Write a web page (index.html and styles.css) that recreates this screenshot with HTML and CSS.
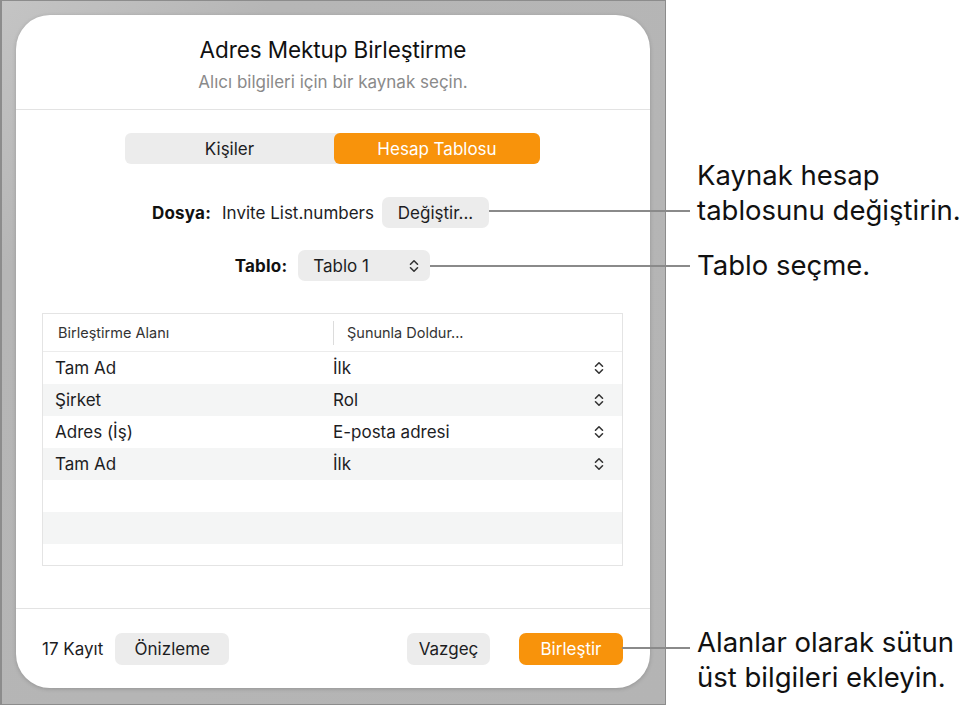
FILE: index.html
```html
<!DOCTYPE html>
<html lang="tr">
<head>
<meta charset="utf-8">
<title>Adres Mektup Birleştirme</title>
<link rel="stylesheet" href="styles.css">
</head>
<body>
<div class="page">
  <div class="frame">
    <div class="dialog">
      <header class="dlg-head">
        <h1 class="title">Adres Mektup Birleştirme</h1>
        <p class="subtitle">Alıcı bilgileri için bir kaynak seçin.</p>
      </header>
      <div class="dlg-body">
        <div class="segmented">
          <div class="seg">Kişiler</div>
          <div class="seg seg-active">Hesap Tablosu</div>
        </div>
        <div class="row row-file">
          <span class="lbl">Dosya:</span>
          <span class="val">Invite List.numbers</span>
          <button class="btn btn-change">Değiştir...</button>
        </div>
        <div class="row row-table">
          <span class="lbl">Tablo:</span>
          <button class="btn popup"><span>Tablo 1</span>
            <svg class="chev" width="10" height="14" viewBox="0 0 10 14"><path d="M1.5 5.2 L5 1.8 L8.5 5.2 M1.5 8.8 L5 12.2 L8.5 8.8" fill="none" stroke="#333" stroke-width="1.6" stroke-linecap="round" stroke-linejoin="round"/></svg>
          </button>
        </div>
        <div class="map-table">
          <div class="thead">
            <div class="th">Birleştirme Alanı</div>
            <div class="th th-2">Şununla Doldur...</div>
          </div>
          <div class="tbody">
            <div class="tr"><span class="c1">Tam Ad</span><span class="c2">İlk</span><svg class="chev" width="10" height="14" viewBox="0 0 10 14"><path d="M1.5 5.2 L5 1.8 L8.5 5.2 M1.5 8.8 L5 12.2 L8.5 8.8" fill="none" stroke="#333" stroke-width="1.6" stroke-linecap="round" stroke-linejoin="round"/></svg></div>
            <div class="tr alt"><span class="c1">Şirket</span><span class="c2">Rol</span><svg class="chev" width="10" height="14" viewBox="0 0 10 14"><path d="M1.5 5.2 L5 1.8 L8.5 5.2 M1.5 8.8 L5 12.2 L8.5 8.8" fill="none" stroke="#333" stroke-width="1.6" stroke-linecap="round" stroke-linejoin="round"/></svg></div>
            <div class="tr"><span class="c1">Adres (İş)</span><span class="c2">E-posta adresi</span><svg class="chev" width="10" height="14" viewBox="0 0 10 14"><path d="M1.5 5.2 L5 1.8 L8.5 5.2 M1.5 8.8 L5 12.2 L8.5 8.8" fill="none" stroke="#333" stroke-width="1.6" stroke-linecap="round" stroke-linejoin="round"/></svg></div>
            <div class="tr alt"><span class="c1">Tam Ad</span><span class="c2">İlk</span><svg class="chev" width="10" height="14" viewBox="0 0 10 14"><path d="M1.5 5.2 L5 1.8 L8.5 5.2 M1.5 8.8 L5 12.2 L8.5 8.8" fill="none" stroke="#333" stroke-width="1.6" stroke-linecap="round" stroke-linejoin="round"/></svg></div>
            <div class="tr"></div>
            <div class="tr alt"></div>
            <div class="tr"></div>
          </div>
        </div>
      </div>
      <footer class="dlg-foot">
        <span class="count">17 Kayıt</span>
        <button class="btn btn-foot btn-preview">Önizleme</button>
        <span class="spacer"></span>
        <button class="btn btn-foot btn-cancel">Vazgeç</button>
        <button class="btn btn-foot btn-primary">Birleştir</button>
      </footer>
    </div>
  </div>

  <div class="callout-line line-1"></div>
  <div class="callout-line line-2"></div>
  <div class="callout-line line-3"></div>
  <p class="callout-text text-1">Kaynak hesap<br>tablosunu değiştirin.</p>
  <p class="callout-text text-2">Tablo seçme.</p>
  <p class="callout-text text-3">Alanlar olarak sütun<br>üst bilgileri ekleyin.</p>
</div>
</body>
</html>
```

FILE: styles.css
```css
* { box-sizing: border-box; }
html, body { margin: 0; padding: 0; background: #fff; }
body { font-family: Inter, "Noto Sans", "DejaVu Sans", sans-serif; color: #1d1d1f; }

.page { position: relative; width: 963px; height: 705px; overflow: hidden; }

.frame {
  width: 666px;
  height: 705px;
  background: linear-gradient(135deg, #c4c4c4 0%, #b6b6b6 20%, #b4b4b4 100%);
  border: 1px solid #8c8c8c;
  border-left-width: 2px;
  padding: 14px 14px 0 14px;
}

.dialog {
  width: 634px;
  height: 673px;
  background: #fff;
  border-radius: 34px;
  box-shadow: 0 1px 4px rgba(0,0,0,0.18);
  display: flex;
  flex-direction: column;
}

.dlg-head {
  padding: 22px 0 16px;
  text-align: center;
  border-bottom: 1px solid #e3e3e3;
}
.title { margin: 0; font-size: 22.5px; line-height: 26px; font-weight: 400; color: #111; letter-spacing: -0.1px; }
.subtitle { margin: 8px 0 0; font-size: 17px; line-height: 22px; color: #8a8a8a; }

.dlg-body {
  flex: 1;
  padding: 23px 27px 0 26px;
  display: flex;
  flex-direction: column;
  border-bottom: 1px solid #e3e3e3;
}

.segmented {
  align-self: center;
  width: 415px;
  height: 31px;
  display: grid;
  grid-template-columns: 209px 206px;
  background: #ececec;
  border-radius: 6px;
}
.seg { display: flex; align-items: center; justify-content: center; font-size: 17px; color: #1d1d1f; }
.seg-active { background: #f8930b; color: #fff; border-radius: 6px; }

.row { display: flex; align-items: center; justify-content: center; font-size: 17px; }
.row-file { margin-top: 33px; padding-right: 24px; }
.row-table { margin-top: 22px; }
.lbl { font-weight: 700; color: #111; letter-spacing: 0.2px; }
.row-file .lbl { margin-right: 11px; }
.row-table .lbl { margin-right: 11px; }
.val { color: #1d1d1f; margin-right: 8px; }

.btn {
  font-family: inherit;
  font-size: 17px;
  color: #1d1d1f;
  background: #ececec;
  border: none;
  border-radius: 7px;
  height: 31px;
  padding: 0 10px;
  white-space: nowrap;
}
.btn-change { width: 107px; }
.popup { width: 132px; display: flex; align-items: center; justify-content: space-between; padding: 0 11px 0 15px; }
.chev { display: block; }

.map-table {
  margin-top: 32px;
  height: 253px;
  border: 1px solid #e4e4e4;
  display: flex;
  flex-direction: column;
}
.thead {
  height: 38px;
  display: grid;
  grid-template-columns: 290px 1fr;
  align-items: center;
  border-bottom: 1px solid #ececec;
  font-size: 14.5px;
  color: #333;
}
.th { padding-left: 15px; }
.th-2 { border-left: 1px solid #dcdcdc; height: 24px; display: flex; align-items: center; padding-left: 13px; }
.tbody { flex: 1; overflow: hidden; }
.tr {
  height: 32px;
  display: grid;
  grid-template-columns: 278px 1fr 10px;
  align-items: center;
  padding: 0 18px 0 12px;
  font-size: 17px;
  color: #1d1d1f;
}
.tr.alt { background: #f4f5f5; }

.dlg-foot {
  height: 79px;
  padding: 0 27px 0 26px;
  display: flex;
  align-items: center;
  font-size: 17px;
}
.count { margin-right: 12px; color: #1d1d1f; }
.btn-foot { height: 32px; }
.btn-preview { width: 114px; }
.spacer { flex: 1; }
.btn-cancel { width: 83px; margin-right: 29px; }
.btn-primary { width: 104px; background: #f8930b; color: #fff; }

.callout-line { position: absolute; height: 2px; background: #8a8a8a; }
.line-1 { left: 489px; width: 201px; top: 210px; }
.line-2 { left: 430px; width: 260px; top: 265px; }
.line-3 { left: 622px; width: 68px; top: 647px; }

.callout-text {
  position: absolute;
  left: 697px;
  margin: 0;
  font-size: 27.5px;
  line-height: 35px;
  color: #111;
  white-space: nowrap;
}
.text-1 { top: 158px; }
.text-2 { top: 248px; }
.text-3 { top: 625px; }
```
